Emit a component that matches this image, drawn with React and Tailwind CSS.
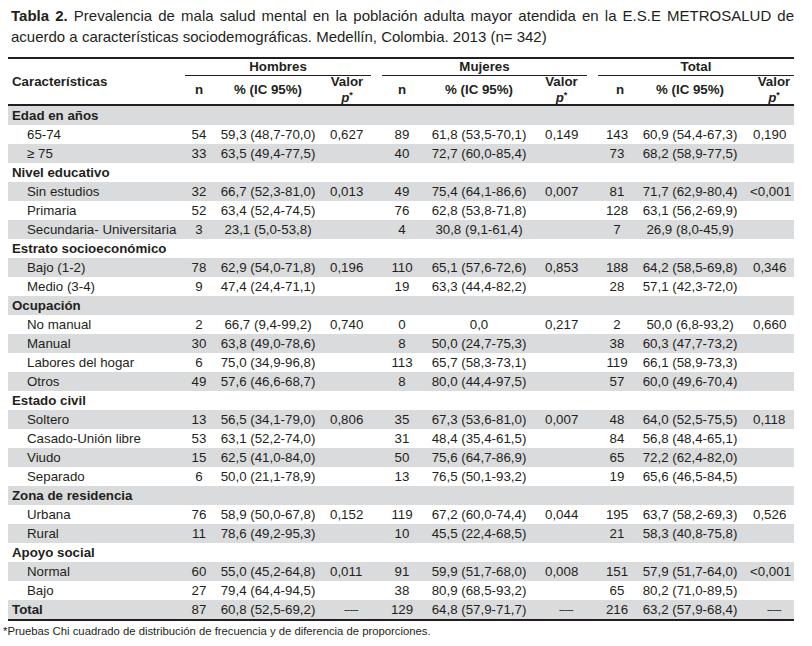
import React from 'react';

const groups = [
  {
    name: "Edad en años",
    rows: [
      ["65-74", "54", "59,3 (48,7-70,0)", "0,627", "89", "61,8 (53,5-70,1)", "0,149", "143", "60,9 (54,4-67,3)", "0,190"],
      ["≥ 75", "33", "63,5 (49,4-77,5)", "", "40", "72,7 (60,0-85,4)", "", "73", "68,2 (58,9-77,5)", ""],
    ],
  },
  {
    name: "Nivel educativo",
    rows: [
      ["Sin estudios", "32", "66,7 (52,3-81,0)", "0,013", "49", "75,4 (64,1-86,6)", "0,007", "81", "71,7 (62,9-80,4)", "<0,001"],
      ["Primaria", "52", "63,4 (52,4-74,5)", "", "76", "62,8 (53,8-71,8)", "", "128", "63,1 (56,2-69,9)", ""],
      ["Secundaria- Universitaria", "3", "23,1 (5,0-53,8)", "", "4", "30,8 (9,1-61,4)", "", "7", "26,9 (8,0-45,9)", ""],
    ],
  },
  {
    name: "Estrato socioeconómico",
    rows: [
      ["Bajo (1-2)", "78", "62,9 (54,0-71,8)", "0,196", "110", "65,1 (57,6-72,6)", "0,853", "188", "64,2 (58,5-69,8)", "0,346"],
      ["Medio (3-4)", "9", "47,4 (24,4-71,1)", "", "19", "63,3 (44,4-82,2)", "", "28", "57,1 (42,3-72,0)", ""],
    ],
  },
  {
    name: "Ocupación",
    rows: [
      ["No manual", "2", "66,7 (9,4-99,2)", "0,740", "0", "0,0", "0,217", "2", "50,0 (6,8-93,2)", "0,660"],
      ["Manual", "30", "63,8 (49,0-78,6)", "", "8", "50,0 (24,7-75,3)", "", "38", "60,3 (47,7-73,2)", ""],
      ["Labores del hogar", "6", "75,0 (34,9-96,8)", "", "113", "65,7 (58,3-73,1)", "", "119", "66,1 (58,9-73,3)", ""],
      ["Otros", "49", "57,6 (46,6-68,7)", "", "8", "80,0 (44,4-97,5)", "", "57", "60,0 (49,6-70,4)", ""],
    ],
  },
  {
    name: "Estado civil",
    rows: [
      ["Soltero", "13", "56,5 (34,1-79,0)", "0,806", "35", "67,3 (53,6-81,0)", "0,007", "48", "64,0 (52,5-75,5)", "0,118"],
      ["Casado-Unión libre", "53", "63,1 (52,2-74,0)", "", "31", "48,4 (35,4-61,5)", "", "84", "56,8 (48,4-65,1)", ""],
      ["Viudo", "15", "62,5 (41,0-84,0)", "", "50", "75,6 (64,7-86,9)", "", "65", "72,2 (62,4-82,0)", ""],
      ["Separado", "6", "50,0 (21,1-78,9)", "", "13", "76,5 (50,1-93,2)", "", "19", "65,6 (46,5-84,5)", ""],
    ],
  },
  {
    name: "Zona de residencia",
    rows: [
      ["Urbana", "76", "58,9 (50,0-67,8)", "0,152", "119", "67,2 (60,0-74,4)", "0,044", "195", "63,7 (58,2-69,3)", "0,526"],
      ["Rural", "11", "78,6 (49,2-95,3)", "", "10", "45,5 (22,4-68,5)", "", "21", "58,3 (40,8-75,8)", ""],
    ],
  },
  {
    name: "Apoyo social",
    rows: [
      ["Normal", "60", "55,0 (45,2-64,8)", "0,011", "91", "59,9 (51,7-68,0)", "0,008", "151", "57,9 (51,7-64,0)", "<0,001"],
      ["Bajo", "27", "79,4 (64,4-94,5)", "", "38", "80,9 (68,5-93,2)", "", "65", "80,2 (71,0-89,5)", ""],
    ],
  },
];

const total = ["Total", "87", "60,8 (52,5-69,2)", "-----", "129", "64,8 (57,9-71,7)", "-----", "216", "63,2 (57,9-68,4)", "-----"];

// flatten groups into striped rows
const rows = [];
groups.forEach((g) => {
  rows.push({ type: "group", label: g.name });
  g.rows.forEach((r) => rows.push({ type: "item", cells: r }));
});
rows.push({ type: "total", cells: total });

function Valor({ v }) {
  if (v === "-----") {
    return <div className="pl-[23px] text-[10px] tracking-[-0.5px]">-----</div>;
  }
  if (v.startsWith("<")) {
    return <div className="pl-[6px] whitespace-nowrap">{v}</div>;
  }
  return <div className="pl-[9px]">{v}</div>;
}

function Row({ row, striped }) {
  const bg = striped ? "bg-[#dadbdc]" : "";
  if (row.type === "group") {
    return (
      <div className={`h-[19px] flex items-center pl-[4px] font-bold ${bg}`}>
        {row.label}
      </div>
    );
  }
  const c = row.cells;
  const isTotal = row.type === "total";
  return (
    <div className={`grid grid-cols-[175px_32px_106px_52px_9px_40px_114px_51px_11px_38px_108px_50px] h-[19px] items-center ${bg}`}>
      <div className={isTotal ? "pl-[4px] font-bold" : "pl-[19px] whitespace-nowrap"}>{c[0]}</div>
      <div className="text-center">{c[1]}</div>
      <div className="text-center">{c[2]}</div>
      <Valor v={c[3]} />
      <div />
      <div className="text-center">{c[4]}</div>
      <div className="text-center">{c[5]}</div>
      <Valor v={c[6]} />
      <div />
      <div className="text-center">{c[7]}</div>
      <div className="text-center">{c[8]}</div>
      <Valor v={c[9]} />
    </div>
  );
}

function ValorHead({ shift }) {
  return (
    <div className={`self-center flex flex-col items-center leading-[16px] ${shift ? "pl-[10px]" : ""}`}>
      <span className="block h-[16px]">Valor</span>
      <span className="block h-[16px]">
        <i>p</i>
        <span className="relative top-[-4px] text-[9px]">*</span>
      </span>
    </div>
  );
}

export default function App() {
  return (
    <div className="w-[812px] h-[646px] bg-white text-[#231f20] font-['Liberation_Sans',Arial,sans-serif] overflow-hidden">
      <p className="pt-[5px] pl-[11px] pr-[18px] text-[15px] leading-[21px] text-justify">
        <b>Tabla 2.</b> Prevalencia de mala salud mental en la población adulta mayor atendida en la E.S.E METROSALUD de acuerdo a características sociodemográficas. Medellín, Colombia. 2013 (n= 342)
      </p>

      <div className="ml-[8px] w-[786px] mt-[10px] text-[13.3px]">
        {/* header */}
        <div className="border-t-2 border-b-2 border-[#231f20] font-bold">
          <div className="grid grid-cols-[175px_32px_106px_52px_9px_40px_114px_51px_11px_38px_108px_50px] grid-rows-[17px_28px]">
            <div className="row-span-2 flex items-center pl-[4px]">Características</div>
            <div className="col-span-3 flex justify-center items-center mx-[2px] border-b border-[#231f20]">Hombres</div>
            <div />
            <div className="col-span-3 flex justify-center items-center border-b border-[#231f20]">Mujeres</div>
            <div />
            <div className="col-span-3 flex justify-center items-center border-b border-[#231f20]">Total</div>

            <div className="flex items-center justify-center">n</div>
            <div className="flex items-center justify-center">% (IC 95%)</div>
            <ValorHead />
            <div />
            <div className="flex items-center justify-center">n</div>
            <div className="flex items-center justify-center">% (IC 95%)</div>
            <ValorHead />
            <div />
            <div className="flex items-center justify-center pl-[6px]">n</div>
            <div className="flex items-center justify-center">% (IC 95%)</div>
            <ValorHead shift />
          </div>
        </div>

        {/* body */}
        <div className="border-b-2 border-[#231f20]">
          {rows.map((r, i) => (
            <Row key={i} row={r} striped={i % 2 === 0} />
          ))}
        </div>
      </div>

      <p className="mt-[3px] pl-[3px] text-[11.3px] leading-[14px]">
        *Pruebas Chi cuadrado de distribución de frecuencia y de diferencia de proporciones.
      </p>
    </div>
  );
}
